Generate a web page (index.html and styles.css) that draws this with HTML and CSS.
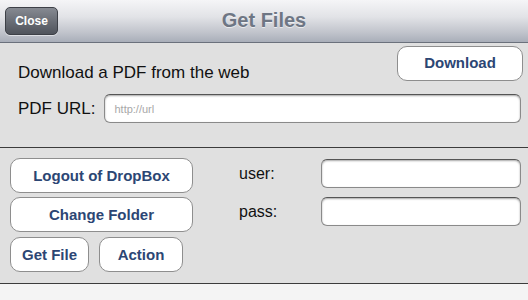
FILE: index.html
```html
<!DOCTYPE html>
<html>
<head>
<meta charset="utf-8">
<link rel="stylesheet" href="styles.css">
</head>
<body>
<div class="screen">
  <header class="nav">
    <div class="nav-left"><button class="close-btn">Close</button></div>
    <div class="nav-title">Get Files</div>
    <div class="nav-right"></div>
  </header>
  <section class="top">
    <div class="row1">
      <span class="label big">Download a PDF from the web</span>
      <button class="btn download">Download</button>
    </div>
    <div class="row2">
      <span class="label big">PDF URL:</span>
      <div class="field url"><span class="placeholder">http://url</span></div>
    </div>
  </section>
  <section class="panel">
    <div class="buttons">
      <button class="btn wide">Logout of DropBox</button>
      <button class="btn wide">Change Folder</button>
      <div class="pair">
        <button class="btn getfile">Get File</button>
        <button class="btn action">Action</button>
      </div>
    </div>
    <div class="creds">
      <span class="label small-l">user:</span>
      <div class="field cred"></div>
      <span class="label small-l">pass:</span>
      <div class="field cred"></div>
    </div>
  </section>
  <div class="below"></div>
</div>
</body>
</html>
```

FILE: styles.css
```css
html, body {
  margin: 0;
  padding: 0;
}
body {
  width: 528px;
  height: 300px;
  overflow: hidden;
  background: #f4f4f4;
  font-family: "Liberation Sans", Arial, sans-serif;
}
.screen {
  display: flex;
  flex-direction: column;
  height: 300px;
}
.nav {
  height: 42px;
  border-bottom: 1px solid #6b717c;
  background: linear-gradient(#f5f5f7 0%, #e2e3e7 40%, #c0c3cb 78%, #a9aeb9 100%);
  display: grid;
  grid-template-columns: 1fr auto 1fr;
  align-items: center;
  flex-shrink: 0;
}
.nav-left {
  padding-left: 5px;
  display: flex;
  align-items: center;
}
.close-btn {
  width: 53px;
  height: 28px;
  margin-top: -1px;
  border: 1px solid #3d4047;
  border-radius: 5px;
  background: linear-gradient(#868a92 0%, #6a6e76 50%, #50545c 100%);
  color: #fff;
  font-family: "Liberation Sans", Arial, sans-serif;
  font-weight: bold;
  font-size: 12px;
  padding: 0;
  box-shadow: 0 1px 0 rgba(255,255,255,0.5);
}
.nav-title {
  font-size: 20px;
  font-weight: bold;
  color: #6e7684;
  text-shadow: 0 1px 0 rgba(255,255,255,0.6);
  margin-top: -1px;
}
.top {
  background: #e0e0e0;
  height: 105px;
  padding: 3px 5px 0 18px;
  border-bottom: 1px solid #3c3c3c;
  box-sizing: border-box;
  flex-shrink: 0;
}
.row1 {
  display: flex;
  justify-content: space-between;
  align-items: flex-start;
}
.label {
  color: #111;
  white-space: nowrap;
  flex-shrink: 0;
}
.big {
  font-size: 17px;
  line-height: 20px;
}
.row1 .label {
  margin-top: 17px;
}
.btn {
  background: #fff;
  border: 1px solid #8e8e8e;
  border-radius: 10px;
  color: #2c4674;
  font-family: "Liberation Sans", Arial, sans-serif;
  font-weight: bold;
  font-size: 15px;
  padding: 0;
  box-sizing: border-box;
  white-space: nowrap;
}
.download {
  width: 126px;
  height: 35px;
  padding-bottom: 2px;
}
.row2 {
  display: flex;
  align-items: center;
  margin-top: 11px;
  padding-right: 2px;
}
.field {
  background: #fff;
  border: 1px solid #8a8a8a;
  border-top-color: #555;
  border-radius: 6px;
  box-shadow: inset 0 1px 2px rgba(0,0,0,0.35);
  box-sizing: border-box;
  flex-shrink: 0;
}
.url {
  width: 417px;
  height: 29px;
  margin-left: 9px;
  display: flex;
  align-items: center;
  padding-left: 9px;
}
.placeholder {
  color: #a8a8a8;
  font-size: 11px;
}
.panel {
  background: #e0e0e0;
  height: 136px;
  box-sizing: border-box;
  border-bottom: 1px solid #3c3c3c;
  padding: 10px 7px 0 10px;
  display: flex;
  flex-shrink: 0;
}
.buttons {
  width: 183px;
  display: flex;
  flex-direction: column;
  gap: 4px;
}
.wide {
  width: 183px;
  height: 35px;
}
.pair {
  display: flex;
  gap: 10px;
  margin-top: 1px;
}
.getfile {
  width: 79px;
  height: 35px;
}
.action {
  width: 84px;
  height: 35px;
}
.creds {
  margin-left: 46px;
  margin-top: 1px;
  display: grid;
  grid-template-columns: 82px 200px;
  grid-auto-rows: 29px;
  row-gap: 9px;
  align-items: center;
  align-content: start;
}
.small-l {
  font-size: 16px;
}
.cred {
  width: 200px;
  height: 29px;
}
.below {
  flex: 1;
  background: #f4f4f4;
}
```
